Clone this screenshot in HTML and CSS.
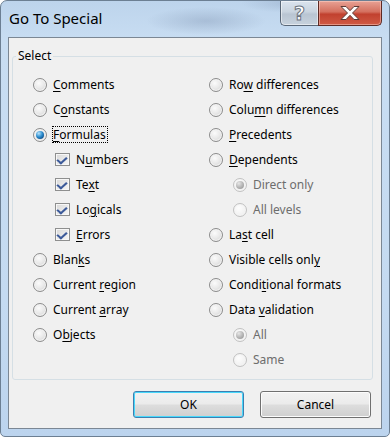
FILE: index.html
```html
<!DOCTYPE html>
<html>
<head>
<title>Go To Special</title>
<link rel="stylesheet" href="styles.css">
</head>
<body>
<div class="window">
  <div class="titlebar">
    <span class="title">Go To Special</span>
    <div class="caption">
      <div class="cap help"><span class="qmark">?</span></div>
      <div class="cap close">
        <svg width="22" height="16" viewBox="0 0 22 16">
          <path d="M2 1.5h5l4 4.2 4-4.2h5l-6.5 6.5 6.5 6.5h-5l-4-4.2-4 4.2h-5l6.5-6.5z" fill="#fff" stroke="#5b3a36" stroke-width="1" stroke-linejoin="round"/>
        </svg>
      </div>
    </div>
  </div>

  <div class="client">
    <fieldset class="group">
      <legend>Select</legend>
      <div class="cols">
        <div class="col">
          <div class="opt"><span class="radio"></span><span class="lbl"><u>C</u>omments</span></div>
          <div class="opt"><span class="radio"></span><span class="lbl">C<u>o</u>nstants</span></div>
          <div class="opt"><span class="radio on"></span><span class="lbl focus"><u>F</u>ormulas</span></div>
          <div class="opt sub"><span class="check"></span><span class="lbl">N<u>u</u>mbers</span></div>
          <div class="opt sub"><span class="check"></span><span class="lbl">Te<u>x</u>t</span></div>
          <div class="opt sub"><span class="check"></span><span class="lbl">Lo<u>g</u>icals</span></div>
          <div class="opt sub"><span class="check"></span><span class="lbl"><u>E</u>rrors</span></div>
          <div class="opt"><span class="radio"></span><span class="lbl">Blan<u>k</u>s</span></div>
          <div class="opt"><span class="radio"></span><span class="lbl">Current <u>r</u>egion</span></div>
          <div class="opt"><span class="radio"></span><span class="lbl">Current <u>a</u>rray</span></div>
          <div class="opt"><span class="radio"></span><span class="lbl">O<u>b</u>jects</span></div>
        </div>
        <div class="col">
          <div class="opt"><span class="radio"></span><span class="lbl">Ro<u>w</u> differences</span></div>
          <div class="opt"><span class="radio"></span><span class="lbl">Colu<u>m</u>n differences</span></div>
          <div class="opt"><span class="radio"></span><span class="lbl"><u>P</u>recedents</span></div>
          <div class="opt"><span class="radio"></span><span class="lbl"><u>D</u>ependents</span></div>
          <div class="opt sub2 off"><span class="radio on"></span><span class="lbl">Direct only</span></div>
          <div class="opt sub2 off"><span class="radio"></span><span class="lbl">All levels</span></div>
          <div class="opt"><span class="radio"></span><span class="lbl">La<u>s</u>t cell</span></div>
          <div class="opt"><span class="radio"></span><span class="lbl">Visible cells onl<u>y</u></span></div>
          <div class="opt"><span class="radio"></span><span class="lbl">Condi<u>t</u>ional formats</span></div>
          <div class="opt"><span class="radio"></span><span class="lbl">Data <u>v</u>alidation</span></div>
          <div class="opt sub2 off"><span class="radio on"></span><span class="lbl">All</span></div>
          <div class="opt sub2 off"><span class="radio"></span><span class="lbl">Same</span></div>
        </div>
      </div>
    </fieldset>

    <div class="buttons">
      <button class="btn default">OK</button>
      <button class="btn">Cancel</button>
    </div>
  </div>
</div>
</body>
</html>
```

FILE: styles.css
```css
body {
  margin: 0;
  background: #ffffff;
  font-family: "Noto Sans", "Open Sans", sans-serif;
}

.window {
  width: 390px;
  height: 437px;
  box-sizing: border-box;
  border: 1px solid #6c7f93;
  border-radius: 7px 7px 5px 5px;
  background:
    radial-gradient(ellipse 60px 14px at 205px 20px, rgba(120,140,170,0.35), rgba(120,140,170,0)),
    radial-gradient(ellipse 50px 10px at 290px 2px, rgba(120,140,170,0.3), rgba(120,140,170,0)),
    linear-gradient(#bdd4ec, #c8ddf2 40px, #c4daf1 300px, #bcd4ee);
  display: flex;
  flex-direction: column;
  overflow: hidden;
}

/* title bar */
.titlebar {
  height: 36px;
  display: flex;
  justify-content: space-between;
  align-items: flex-start;
}
.title {
  padding: 7px 0 0 8px;
  font-size: 15px;
  color: #000;
}
.caption {
  display: flex;
  margin-right: 7px;
}
.cap {
  height: 25px;
  box-sizing: border-box;
  border: 1px solid #5a6878;
  border-top: none;
  display: flex;
  align-items: center;
  justify-content: center;
}
.help {
  width: 38px;
  border-right: none;
  border-radius: 0 0 0 5px;
  background: linear-gradient(#dbe4ee, #c9d4df 45%, #b9c5d2 55%, #c7d2dd);
  box-shadow: inset 0 0 0 1px rgba(255,255,255,0.5);
}
.qmark {
  font: bold 19px "DejaVu Sans", sans-serif;
  color: #fff;
  -webkit-text-stroke: 1px #6c7480;
  line-height: 20px;
}
.close {
  width: 64px;
  border-radius: 0 0 5px 0;
  border-color: #5e2a24;
  background: linear-gradient(#e8a295, #d4705f 45%, #c1412f 55%, #d05a44);
  box-shadow: inset 0 0 0 1px rgba(255,220,210,0.45);
}

/* client area */
.client {
  margin-left: 7px;
  width: 374px;
  height: 392px;
  box-sizing: border-box;
  border: 1px solid #7b8794;
  background: #f0f0f0;
  display: flex;
  flex-direction: column;
}

.group {
  margin: 10px 8px 0 3px;
  padding: 0 0 7px 0;
  border: 1px solid #d5dfe5;
  border-radius: 3px;
  min-width: 0;
}
.group legend {
  margin-left: 3px;
  padding: 0 2px;
  font-size: 12px;
  line-height: 16px;
  color: #000;
}

.cols {
  display: flex;
  padding: 8px 0 0 20px;
}
.col {
  width: 176px;
  flex-shrink: 0;
}
.col + .col {
  flex: 1;
}

.opt {
  height: 25px;
  display: flex;
  align-items: center;
  font-size: 12px;
  color: #000;
}
.opt.sub {
  padding-left: 22px;
}
.opt.sub2 {
  padding-left: 24px;
}
.opt.off {
  color: #6d6d6d;
}
.lbl {
  margin-left: 5px;
  line-height: 15px;
  padding: 0 1px 0 0;
  border: 1px dotted transparent;
}
.lbl.focus {
  border-color: #000;
}
.lbl u {
  text-underline-offset: 2px;
}

/* radio button */
.radio {
  width: 14px;
  height: 14px;
  box-sizing: border-box;
  border-radius: 50%;
  border: 1px solid #8c8c8c;
  background: radial-gradient(circle at 40% 35%, #fbfbfb, #eaeaea 45%, #cfcfcf);
  box-shadow: inset 0 0 0 1px #f4f4f4;
  display: flex;
  align-items: center;
  justify-content: center;
  flex-shrink: 0;
}
.radio.on::after {
  content: "";
  width: 8px;
  height: 8px;
  border-radius: 50%;
  background: radial-gradient(circle at 35% 30%, #b9e4fb, #2f8fd0 45%, #0c4f8c 80%, #143a60);
}
.off .radio {
  border-color: #c1c1c1;
  background: radial-gradient(circle at 40% 35%, #fdfdfd, #f2f2f2 60%, #e4e4e4);
}
.off .radio.on::after {
  background: radial-gradient(circle at 35% 30%, #e6e6e6, #b3b3b3 55%, #8f8f8f);
}

/* check box */
.check {
  width: 15px;
  height: 13px;
  box-sizing: border-box;
  border: 1px solid #8e8f8f;
  background: linear-gradient(135deg, #d9d9d9, #f6f6f6);
  box-shadow: inset 0 0 0 1px #f7f7f7;
  position: relative;
  flex-shrink: 0;
}
.check::after {
  content: "";
  position: absolute;
  left: 3px;
  top: 1px;
  width: 4px;
  height: 7px;
  border: solid #3c5a9a;
  border-width: 0 2px 2px 0;
  transform: rotate(40deg) skewX(-8deg);
}

/* buttons */
.buttons {
  display: flex;
  justify-content: flex-end;
  gap: 16px;
  margin-top: 11px;
  padding-right: 10px;
}
.btn {
  width: 111px;
  height: 27px;
  border: 1px solid #707070;
  border-radius: 3px;
  background: linear-gradient(#f2f2f2, #ebebeb 48%, #dddddd 52%, #cfcfcf);
  box-shadow: inset 0 0 0 1px #fcfcfc;
  font-family: "Noto Sans", "Open Sans", sans-serif;
  font-size: 12px;
  color: #000;
  padding: 0;
}
.btn.default {
  border-color: #3c7fb1;
  box-shadow: inset 0 0 0 1px #48d8fb;
}
```
